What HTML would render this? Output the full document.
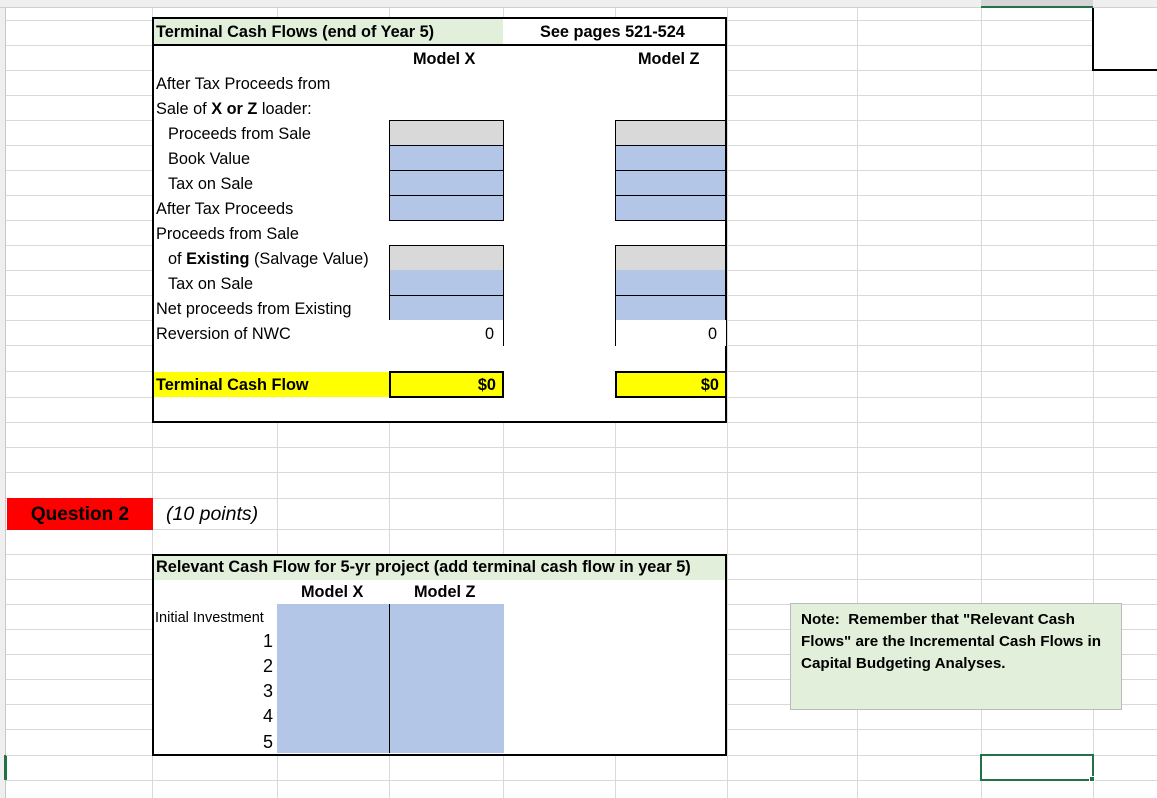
<!DOCTYPE html>
<html><head><style>
body{margin:0;width:1157px;height:798px;overflow:hidden;background:#fff;font-family:"Liberation Sans",Arial,sans-serif;position:relative}
div{position:absolute;box-sizing:border-box}
.vl{width:1px;background:#d9d9d9;top:8px;height:790px}
.hl{height:1px;background:#d9d9d9;left:6px;width:1151px}
.t{font-size:16.3px;white-space:nowrap;line-height:25px;color:#000;letter-spacing:0}
.b{font-weight:bold}
.gray{background:#d9d9d9;border:1px solid #000}
.blue{background:#b4c6e7;border:1px solid #000}
</style></head><body>
<div style="left:0;top:0;width:1157px;height:8px;background:#efefef;border-bottom:1px solid #d0d0d0"></div>
<div style="left:981px;top:0;width:112px;height:8px;background:#d6d6d6;border-bottom:2px solid #217346"></div>
<div style="left:0;top:8px;width:6px;height:790px;background:#efefef;border-right:1px solid #c8c8c8"></div>
<div style="left:4px;top:755px;width:3px;height:25px;background:#217346"></div>
<div class="vl" style="left:152px"></div><div class="vl" style="left:277px"></div><div class="vl" style="left:389px"></div><div class="vl" style="left:503px"></div><div class="vl" style="left:615px"></div><div class="vl" style="left:727px"></div><div class="vl" style="left:857px"></div><div class="vl" style="left:981px"></div><div class="vl" style="left:1093px"></div>
<div class="hl" style="top:20px"></div><div class="hl" style="top:45px"></div><div class="hl" style="top:70px"></div><div class="hl" style="top:95px"></div><div class="hl" style="top:120px"></div><div class="hl" style="top:145px"></div><div class="hl" style="top:170px"></div><div class="hl" style="top:195px"></div><div class="hl" style="top:220px"></div><div class="hl" style="top:245px"></div><div class="hl" style="top:270px"></div><div class="hl" style="top:295px"></div><div class="hl" style="top:320px"></div><div class="hl" style="top:345px"></div><div class="hl" style="top:371px"></div><div class="hl" style="top:397px"></div><div class="hl" style="top:422px"></div><div class="hl" style="top:447px"></div><div class="hl" style="top:472px"></div><div class="hl" style="top:498px"></div><div class="hl" style="top:529px"></div><div class="hl" style="top:554px"></div><div class="hl" style="top:579px"></div><div class="hl" style="top:604px"></div><div class="hl" style="top:629px"></div><div class="hl" style="top:654px"></div><div class="hl" style="top:679px"></div><div class="hl" style="top:704px"></div><div class="hl" style="top:729px"></div><div class="hl" style="top:755px"></div><div class="hl" style="top:780px"></div>

<div style="left:1092px;top:8px;width:65px;height:63px;border-left:2px solid #000;border-bottom:2px solid #000;background:#fff"></div>

<div style="left:152px;top:17px;width:575px;height:406px;background:#fff;border:2px solid #000"></div>
<div style="left:154px;top:19px;width:349px;height:25px;background:#e2efda"></div>
<div style="left:152px;top:44px;width:575px;height:2px;background:#000"></div>
<div class="t b" style="left:156px;top:20px">Terminal Cash Flows (end of Year 5)</div>
<div class="t b" style="left:540px;top:20px">See pages 521-524</div>
<div class="t b" style="left:413px;top:47px">Model X</div>
<div class="t b" style="left:638px;top:47px">Model Z</div>
<div class="t" style="left:156px;top:72px">After Tax Proceeds from</div>
<div class="t" style="left:156px;top:97px">Sale of <b>X or Z</b> loader:</div>
<div class="t" style="left:168px;top:122px">Proceeds from Sale</div>
<div class="t" style="left:168px;top:147px">Book Value</div>
<div class="t" style="left:168px;top:172px">Tax on Sale</div>
<div class="t" style="left:156px;top:197px">After Tax Proceeds</div>
<div class="t" style="left:156px;top:222px">Proceeds from Sale</div>
<div class="t" style="left:168px;top:247px">of <b>Existing</b> (Salvage Value)</div>
<div class="t" style="left:168px;top:272px">Tax on Sale</div>
<div class="t" style="left:156px;top:297px">Net proceeds from Existing</div>
<div class="t" style="left:156px;top:322px">Reversion of NWC</div>

<div class="gray" style="left:389px;top:120px;width:115px;height:26px"></div>
<div class="blue" style="left:389px;top:145px;width:115px;height:26px"></div>
<div class="blue" style="left:389px;top:170px;width:115px;height:26px"></div>
<div class="blue" style="left:389px;top:195px;width:115px;height:26px"></div>
<div class="gray" style="left:389px;top:245px;width:115px;height:26px;border-bottom:none"></div>
<div class="blue" style="left:389px;top:270px;width:115px;height:26px;border-top:none"></div>
<div class="blue" style="left:389px;top:295px;width:115px;height:26px"></div>
<div style="left:389px;top:320px;width:115px;height:26px;border-right:1px solid #000;background:#fff"></div>
<div class="t" style="left:389px;top:322px;width:105px;text-align:right">0</div>

<div class="gray" style="left:615px;top:120px;width:111px;height:26px"></div>
<div class="blue" style="left:615px;top:145px;width:111px;height:26px"></div>
<div class="blue" style="left:615px;top:170px;width:111px;height:26px"></div>
<div class="blue" style="left:615px;top:195px;width:111px;height:26px"></div>
<div class="gray" style="left:615px;top:245px;width:111px;height:26px;border-bottom:none"></div>
<div class="blue" style="left:615px;top:270px;width:111px;height:26px;border-top:none"></div>
<div class="blue" style="left:615px;top:295px;width:111px;height:26px"></div>
<div style="left:615px;top:320px;width:111px;height:26px;border-left:1px solid #000;background:#fff"></div>
<div class="t" style="left:615px;top:322px;width:102px;text-align:right">0</div>

<div style="left:154px;top:372px;width:235px;height:25px;background:#ff0"></div>
<div class="t b" style="left:156px;top:373px">Terminal Cash Flow</div>
<div style="left:389px;top:371px;width:115px;height:27px;background:#ff0;border:2px solid #000"></div>
<div class="t b" style="left:389px;top:373px;width:107px;text-align:right">$0</div>
<div style="left:615px;top:371px;width:112px;height:27px;background:#ff0;border:2px solid #000"></div>
<div class="t b" style="left:615px;top:373px;width:104px;text-align:right">$0</div>

<div style="left:7px;top:498px;width:146px;height:32px;background:#f00"></div>
<div class="t b" style="left:7px;top:502px;width:146px;text-align:center;font-size:19px">Question 2</div>
<div class="t" style="left:166px;top:502px;font-size:19.5px;font-style:italic">(10 points)</div>

<div style="left:152px;top:554px;width:575px;height:202px;background:#fff;border:2px solid #000"></div>
<div style="left:154px;top:556px;width:571px;height:24px;background:#e2efda"></div>
<div class="t b" style="left:156px;top:555px">Relevant Cash Flow for 5-yr project (add terminal cash flow in year 5)</div>
<div class="t b" style="left:301px;top:580px">Model X</div>
<div class="t b" style="left:414px;top:580px">Model Z</div>
<div style="left:277px;top:604px;width:227px;height:149px;background:#b4c6e7"></div>
<div style="left:389px;top:604px;width:1px;height:149px;background:#000"></div>
<div class="t" style="left:155px;top:606px;font-size:14.5px">Initial Investment</div>
<div class="t" style="left:200px;top:629px;width:73px;text-align:right;font-size:18px">1</div>
<div class="t" style="left:200px;top:654px;width:73px;text-align:right;font-size:18px">2</div>
<div class="t" style="left:200px;top:679px;width:73px;text-align:right;font-size:18px">3</div>
<div class="t" style="left:200px;top:704px;width:73px;text-align:right;font-size:18px">4</div>
<div class="t" style="left:200px;top:730px;width:73px;text-align:right;font-size:18px">5</div>

<div style="left:790px;top:603px;width:332px;height:107px;background:#e2efda;border:1px solid #bbb"></div>
<div class="b" style="left:801px;top:609px;width:330px;font-size:15.2px;line-height:22px;white-space:nowrap">Note:&nbsp; Remember that "Relevant Cash<br>Flows" are the Incremental Cash Flows in<br>Capital Budgeting Analyses.</div>

<div style="left:980px;top:754px;width:114px;height:27px;border:2px solid #217346"></div>
<div style="left:1089px;top:776px;width:6px;height:6px;background:#217346;border:1px solid #fff"></div>
</body></html>
